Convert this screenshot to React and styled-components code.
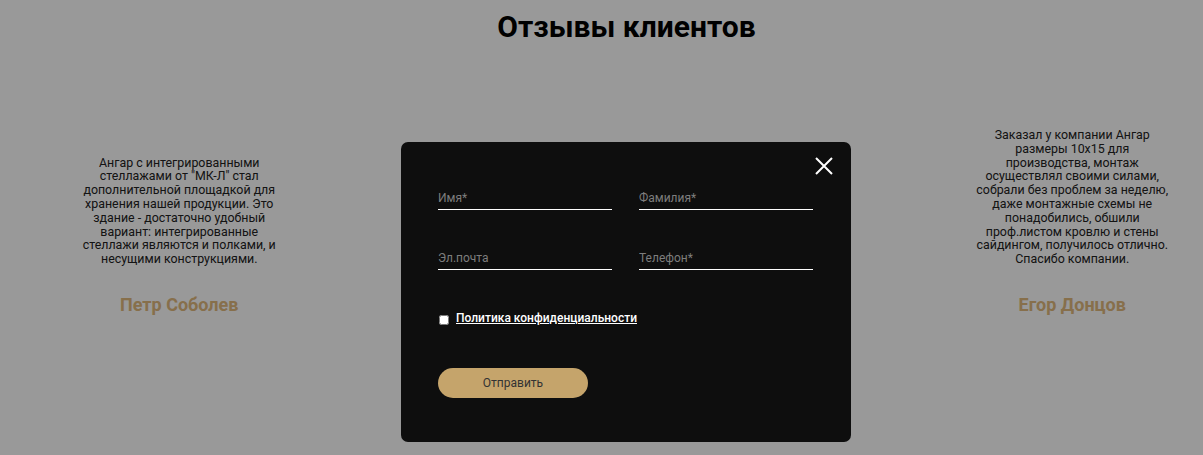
import React from 'react';
import styled, { createGlobalStyle } from 'styled-components';

const GlobalStyle = createGlobalStyle`
    html, body {
        margin: 0;
        padding: 0;
        background: #fff;
        font-family: Roboto, "Liberation Sans", Arial, sans-serif;
    }
    * { box-sizing: border-box; }
`

const Page = styled.div`
    width: 1203px;
    height: 455px;
    overflow: hidden;
    position: relative;
`

const Title = styled.h2`
    margin: 0;
    padding-top: 9px;
    padding-left: 50px;
    text-align: center;
    font-size: 30px;
    line-height: 36px;
    font-weight: 700;
    color: #000;
`

const Slider = styled.div`
    width: 1203px;
    overflow: hidden;
    margin-top: 79px;
`

const Track = styled.div`
    display: flex;
    width: 1340px;
    margin-left: -44px;
`

const Slide = styled.div`
    width: 446.5px;
    height: 191px;
    display: flex;
    flex-direction: column;
    align-items: center;
    justify-content: flex-end;
`

const Quote = styled.p`
    margin: 0;
    width: ${p => p.$w || 200}px;
    text-align: center;
    font-size: 12.4px;
    line-height: 13.8px;
    color: #222;
`

const Author = styled.div`
    margin-top: 29px;
    font-size: 18px;
    line-height: 20px;
    font-weight: 700;
    color: #e1b97d;
`

const Overlay = styled.div`
    position: fixed;
    inset: 0;
    background: rgba(0,0,0,0.4);
    display: flex;
    align-items: flex-start;
    justify-content: flex-start;
    padding: 142px 0 0 401px;
`

const Modal = styled.div`
    position: relative;
    width: 450px;
    height: 300px;
    background: #0e0e0e;
    border-radius: 7px;
    padding: 49px 38px 0 37px;
`

const Close = styled.button`
    position: absolute;
    top: 14px;
    right: 17px;
    width: 20px;
    height: 20px;
    padding: 0;
    border: 0;
    background: none;
    cursor: pointer;
    display: flex;
    align-items: center;
    justify-content: center;
`

const Fields = styled.div`
    display: grid;
    grid-template-columns: 174px 174px;
    column-gap: 27px;
    row-gap: 41px;
`

const Input = styled.input`
    width: 100%;
    height: 19px;
    padding: 0 0 4px;
    border: 0;
    border-bottom: 1px solid #fff;
    background: transparent;
    font-family: inherit;
    font-size: 12px;
    color: #fff;
    outline: none;

    &::placeholder {
        color: #7d7d7d;
    }
`

const Policy = styled.label`
    display: flex;
    align-items: center;
    gap: 7px;
    margin-top: 41px;
    height: 14px;
`

const Check = styled.input`
    width: 10px;
    height: 10px;
    margin: 3px 0 0 1px;
    accent-color: #fff;
`

const PolicyLink = styled.a`
    font-size: 12px;
    line-height: 14px;
    font-weight: 500;
    color: #fff;
    text-decoration: underline;
`

const Submit = styled.button`
    display: block;
    margin-top: 43px;
    width: 150px;
    height: 30px;
    border: 0;
    border-radius: 15px;
    background: #c5a46b;
    font-family: inherit;
    font-size: 12px;
    color: #333;
    cursor: pointer;
`

const reviews = [
    {
        text: 'Ангар с интегрированными стеллажами от "МК-Л" стал дополнительной площадкой для хранения нашей продукции. Это здание - достаточно удобный вариант: интегрированные стеллажи являются и полками, и несущими конструкциями.',
        name: 'Петр Соболев',
        w: 202,
    },
    {
        text: '',
        name: '',
        w: 202,
    },
    {
        text: 'Заказал у компании Ангар размеры 10х15 для производства, монтаж осуществлял своими силами, собрали без проблем за неделю, даже монтажные схемы не понадобились, обшили проф.листом кровлю и стены сайдингом, получилось отлично. Спасибо компании.',
        name: 'Егор Донцов',
        w: 198,
    },
];

export default function App() {
    return (
        <Page>
            <GlobalStyle />
            <Title>Отзывы клиентов</Title>
            <Slider>
                <Track>
                    {reviews.map((r, i) => (
                        <Slide key={i}>
                            <Quote $w={r.w}>{r.text}</Quote>
                            <Author>{r.name}</Author>
                        </Slide>
                    ))}
                </Track>
            </Slider>
            <Overlay>
                <Modal>
                    <Close aria-label="Закрыть">
                        <svg width="18" height="18" viewBox="0 0 18 18">
                            <path d="M1 1L17 17M17 1L1 17" stroke="#fff" strokeWidth="2" />
                        </svg>
                    </Close>
                    <Fields>
                        <Input placeholder="Имя*" />
                        <Input placeholder="Фамилия*" />
                        <Input placeholder="Эл.почта" />
                        <Input placeholder="Телефон*" />
                    </Fields>
                    <Policy>
                        <Check type="checkbox" />
                        <PolicyLink href="#">Политика конфиденциальности</PolicyLink>
                    </Policy>
                    <Submit>Отправить</Submit>
                </Modal>
            </Overlay>
        </Page>
    );
}
